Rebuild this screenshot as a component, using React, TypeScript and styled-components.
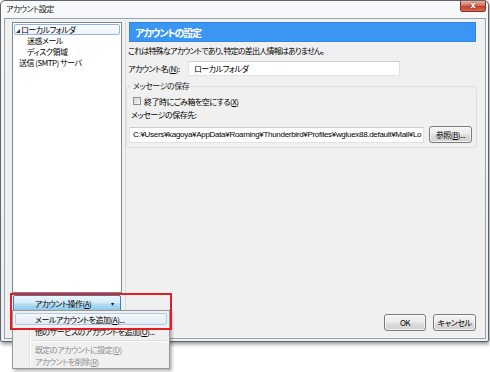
import React from "react";
import styled, { createGlobalStyle, css } from "styled-components";

const GlobalStyle = createGlobalStyle`
  html, body {
    margin: 0;
    padding: 0;
    background: #ffffff;
  }
  body {
    font-family: "Noto Sans CJK JP", "Liberation Sans", sans-serif;
    font-size: 8px;
    letter-spacing: -0.5px;
    font-feature-settings: "palt" 1;
    color: #000;
  }
`;

interface ITreeItem {
  label: React.ReactNode;
  level: number;
  selected?: boolean;
  open?: boolean;
}

const treeItems: ITreeItem[] = [
  { label: "ローカルフォルダ", level: 0, selected: true, open: true },
  { label: "迷惑メール", level: 1 },
  { label: "ディスク領域", level: 1 },
  { label: "送信 (SMTP) サーバ", level: 0 },
];

const App: React.FC = () => {
  return (
    <>
      <GlobalStyle />
      <Page>
        <Window>
          <TitleBar>
            <Title>アカウント設定</Title>
            <CloseButton>x</CloseButton>
          </TitleBar>

          <Client>
            <MainRow>
              <LeftCol>
                <Tree>
                  {treeItems.map((item, i) => (
                    <TreeRow key={i} level={item.level} selected={item.selected}>
                      {item.open && (
                        <Twisty viewBox="0 0 4 4">
                          <polygon points="4,0 4,4 0,4" fill="#333" />
                        </Twisty>
                      )}
                      {item.label}
                    </TreeRow>
                  ))}
                </Tree>
                <ActionButton>
                  <span>
                    アカウント操作(<u>A</u>)
                  </span>
                  <DropArrow>▾</DropArrow>
                </ActionButton>
              </LeftCol>

              <RightPanel>
                <Header>アカウントの設定</Header>
                <Description>
                  これは特殊なアカウントであり、特定の差出人情報はありません。
                </Description>
                <FieldRow>
                  <FieldLabel>
                    アカウント名(<u>N</u>):
                  </FieldLabel>
                  <TextBox width={212}>ローカルフォルダ</TextBox>
                </FieldRow>

                <GroupBox>
                  <Legend>メッセージの保存</Legend>
                  <CheckRow>
                    <CheckBox />
                    終了時にごみ箱を空にする(<u>X</u>)
                  </CheckRow>
                  <SubLabel>メッセージの保存先:</SubLabel>
                  <PathRow>
                    <PathBox>
                      C:¥Users¥kagoya¥AppData¥Roaming¥Thunderbird¥Profiles¥wgluex88.default¥Mail¥Lo
                    </PathBox>
                    <Button width={43}>
                      参照(<u>B</u>)...
                    </Button>
                  </PathRow>
                </GroupBox>
              </RightPanel>
            </MainRow>

            <Footer>
              <Button width={42}>OK</Button>
              <Button width={43}>キャンセル</Button>
            </Footer>
          </Client>

          <Menu>
            <MenuItem active>
              メールアカウントを追加(<u>A</u>)...
            </MenuItem>
            <MenuItem>
              他のサービスのアカウントを追加(<u>O</u>)...
            </MenuItem>
            <MenuSeparator />
            <MenuItem dim>
              既定のアカウントに設定(<u>D</u>)
            </MenuItem>
            <MenuItem dim>
              アカウントを削除(<u>R</u>)
            </MenuItem>
          </Menu>

          <RedMark />
        </Window>
      </Page>
    </>
  );
};

const Page = styled.div`
  width: 490px;
  height: 372px;
  position: relative;
  background: #fff;
`;

const Window = styled.div`
  position: relative;
  box-sizing: border-box;
  width: 489px;
  height: 342px;
  display: flex;
  flex-direction: column;
  border: 1px solid #5d646c;
  border-radius: 5px 5px 2px 2px;
  background: linear-gradient(#f6f8fa, #eceff3);
  box-shadow: 1px 2px 4px rgba(0, 0, 0, 0.45);
`;

const TitleBar = styled.div`
  height: 17px;
  display: flex;
  align-items: flex-start;
  justify-content: space-between;
  padding: 0 2px 0 5px;
`;

const Title = styled.div`
  margin-top: 2px;
  line-height: 12px;
  color: #1a1a1a;
`;

const CloseButton = styled.div`
  width: 26px;
  height: 11px;
  display: flex;
  align-items: center;
  justify-content: center;
  box-sizing: border-box;
  border: 1px solid #8a3329;
  border-top: none;
  border-radius: 0 0 3px 3px;
  background: linear-gradient(#eab3a6, #d0705f 45%, #c0432f 55%, #d7684f);
  color: #fff;
  font-family: "DejaVu Sans", sans-serif;
  font-weight: bold;
  font-size: 8px;
  line-height: 8px;
  letter-spacing: 0;
  text-shadow: 0 0 2px #6b1a10;
`;

const Client = styled.div`
  flex: 1;
  margin: 0 2px 2px 3px;
  display: flex;
  flex-direction: column;
  border: 1px solid #9aa3ad;
  background: #f0f0f0;
  padding: 3px 9px 7px 7px;
`;

const MainRow = styled.div`
  flex: 1;
  display: flex;
  gap: 3px;
  min-height: 0;
`;

const LeftCol = styled.div`
  width: 112px;
  display: flex;
  flex-direction: column;
`;

const Tree = styled.div`
  flex: 1;
  box-sizing: border-box;
  border: 1px solid #828790;
  background: #fff;
  padding-top: 1px;
`;

const TreeRow = styled.div<{ level: number; selected?: boolean }>`
  box-sizing: border-box;
  height: 11px;
  line-height: 10px;
  margin: 0 1px;
  white-space: nowrap;
  padding-left: ${(p) => (p.level === 1 ? 12 : p.selected ? 1 : 4)}px;
  border: 1px solid transparent;
  display: flex;
  align-items: center;
  ${(p) =>
    p.selected &&
    css`
      border-color: #8fb4e0;
      border-radius: 2px;
      background: linear-gradient(#fbfdff, #eef4fc);
    `}
`;

const Twisty = styled.svg`
  width: 4px;
  height: 4px;
  margin: 2px 1px 0 0;
`;

const ActionButton = styled.div`
  margin: 2px 1px 0 1px;
  box-sizing: border-box;
  height: 17px;
  display: flex;
  align-items: center;
  justify-content: center;
  position: relative;
  border: 1px solid #3c7fb1;
  border-radius: 2px;
  background: linear-gradient(#e8f5fd, #d3ecfa 45%, #b0dbf3 55%, #8ec8ea);
  padding-right: 8px;
  span {
    line-height: 12px;
  }
`;

const DropArrow = styled.span`
  position: absolute;
  right: 7px;
  top: 2px;
  font-size: 6px;
  color: #111;
`;

const RightPanel = styled.div`
  flex: 1;
  display: flex;
  flex-direction: column;
  border-left: 1px solid #dcdcdc;
  padding-left: 2px;
`;

const Header = styled.div`
  margin-left: 1px;
  height: 20px;
  box-sizing: border-box;
  display: flex;
  align-items: center;
  padding-left: 5px;
  background: #3b95f3;
  border: 1px solid #3187e6;
  color: #fff;
  font-weight: bold;
  font-size: 10px;
  letter-spacing: -1.2px;
`;

const Description = styled.div`
  margin-top: 3px;
  line-height: 12px;
  white-space: nowrap;
  letter-spacing: -0.8px;
`;

const FieldRow = styled.div`
  margin-top: 4px;
  display: flex;
  align-items: center;
  height: 15px;
`;

const FieldLabel = styled.div`
  width: 60px;
  white-space: nowrap;
`;

const inputStyle = css`
  box-sizing: border-box;
  background: #fff;
  border: 1px solid #dfe3e8;
  border-top-color: #c9ced5;
  white-space: nowrap;
  overflow: hidden;
  display: flex;
  align-items: center;
`;

const TextBox = styled.div<{ width: number }>`
  ${inputStyle};
  width: ${(p) => p.width}px;
  height: 15px;
  padding-left: 5px;
`;

const GroupBox = styled.fieldset`
  margin: 4px -1px 0 -2px;
  padding: 3px 4px 4px 2px;
  border: 1px solid #d9dfe4;
  border-radius: 3px;
  min-width: 0;
`;

const Legend = styled.legend`
  padding: 0 2px;
  margin-left: 2px;
  line-height: 12px;
  color: #1e1e1e;
`;

const CheckRow = styled.div`
  display: flex;
  align-items: center;
  height: 12px;
  margin-left: 4px;
  white-space: nowrap;
`;

const CheckBox = styled.div`
  width: 8px;
  height: 8px;
  box-sizing: border-box;
  margin-right: 3px;
  border: 1px solid #8e8f8f;
  background: linear-gradient(135deg, #d4d4d4, #f6f6f6);
`;

const SubLabel = styled.div`
  margin-top: 2px;
  margin-left: 2px;
  line-height: 12px;
`;

const PathRow = styled.div`
  margin-top: 5px;
  display: flex;
  align-items: center;
`;

const PathBox = styled.div`
  ${inputStyle};
  width: 295px;
  height: 16px;
  padding-left: 3px;
  font-family: "Liberation Sans", sans-serif;
  font-size: 8px;
  letter-spacing: -0.3px;
`;

const Button = styled.div<{ width: number }>`
  width: ${(p) => p.width}px;
  height: 17px;
  box-sizing: border-box;
  margin-left: 5px;
  display: flex;
  align-items: center;
  justify-content: center;
  white-space: nowrap;
  border: 1px solid #7a7a7a;
  border-radius: 3px;
  background: linear-gradient(#f4f4f4, #ececec 45%, #dddddd 55%, #d0d0d0);
  box-shadow: inset 0 0 0 1px rgba(255, 255, 255, 0.7);
`;

const Footer = styled.div`
  margin-top: 2px;
  display: flex;
  justify-content: flex-end;
  gap: 2px;
`;

const Menu = styled.div`
  position: absolute;
  left: 11px;
  top: 309px;
  width: 158px;
  box-sizing: border-box;
  padding: 2px 2px 1px 2px;
  background: #f0f0f0;
  border: 1px solid #979797;
  box-shadow: 2px 2px 3px rgba(0, 0, 0, 0.3);
  z-index: 2;
  &::before {
    content: "";
    position: absolute;
    left: 16px;
    top: 2px;
    bottom: 2px;
    width: 1px;
    background: #e2e3e3;
    box-shadow: 1px 0 0 #fff;
  }
`;

const MenuItem = styled.div<{ active?: boolean; dim?: boolean }>`
  position: relative;
  height: 12px;
  box-sizing: border-box;
  padding-left: 19px;
  display: flex;
  align-items: center;
  white-space: nowrap;
  border: 1px solid transparent;
  border-radius: 2px;
  color: ${(p) => (p.dim ? "#8d8d8d" : "#000")};
  ${(p) =>
    p.active &&
    css`
      border-color: #b4cbe8;
      background: linear-gradient(#f3f6fb, #e3ebf6);
    `}
`;

const MenuSeparator = styled.div`
  height: 6px;
  margin-left: 18px;
  display: flex;
  align-items: center;
  &::after {
    content: "";
    flex: 1;
    height: 1px;
    background: #e0e0e0;
    box-shadow: 0 1px 0 #fff;
  }
`;

const RedMark = styled.div`
  position: absolute;
  left: 9px;
  top: 292px;
  width: 162px;
  height: 37px;
  box-sizing: border-box;
  border: 2px solid #e31e26;
  z-index: 3;
  pointer-events: none;
`;

export default App;
